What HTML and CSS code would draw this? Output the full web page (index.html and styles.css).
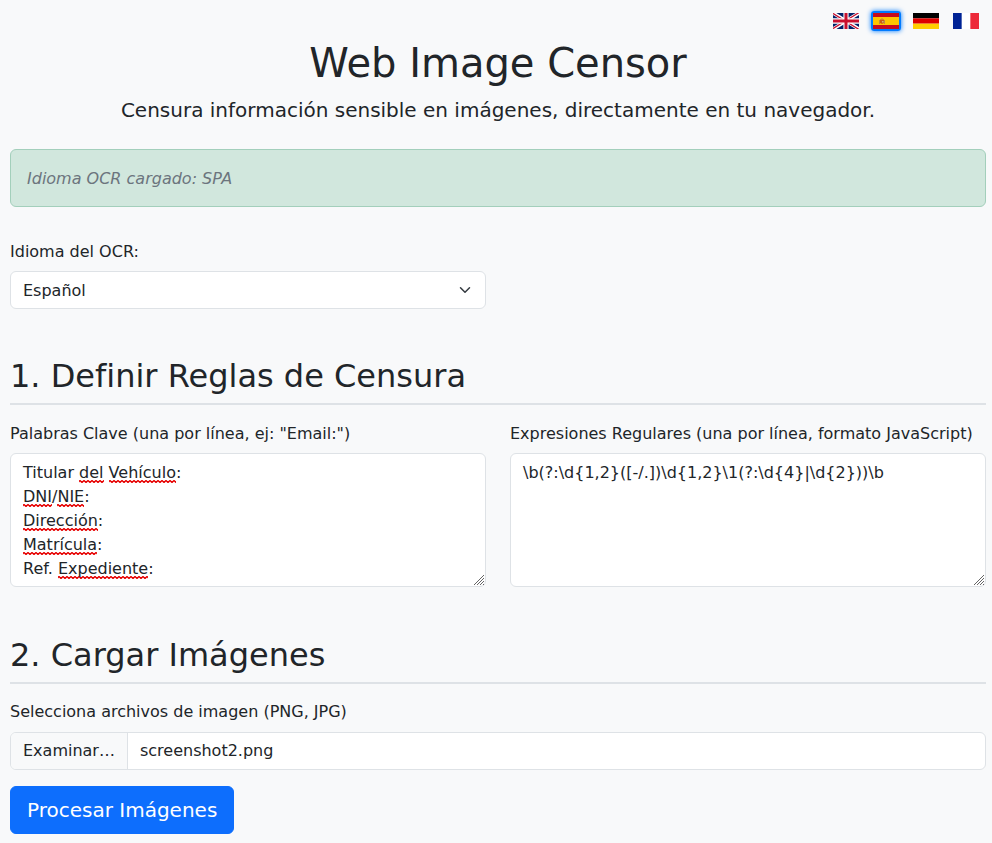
FILE: index.html
```html
<!DOCTYPE html>
<html lang="es">
<head>
<meta charset="utf-8">
<title>Web Image Censor</title>
<link rel="stylesheet" href="styles.css">
</head>
<body>
<nav class="langs">
  <button class="flag" aria-label="English"><svg width="26" height="16" viewBox="0 0 60 36" preserveAspectRatio="none"><path fill="#012169" d="M0 0h60v36H0z"/><path stroke="#fff" stroke-width="8" d="M0 0l60 36M60 0L0 36"/><path stroke="#c8102e" stroke-width="3" d="M0 1l60 36M60-1L0 35"/><path stroke="#fff" stroke-width="12" d="M30 0v36M0 18h60"/><path stroke="#c8102e" stroke-width="7" d="M30 0v36M0 18h60"/></svg></button>
  <button class="flag active" aria-label="Español"><svg width="26" height="16" viewBox="0 0 26 16"><path fill="#c60b1e" d="M0 0h26v16H0z"/><path fill="#ffc400" d="M0 4h26v8H0z"/><path fill="#ad1519" opacity=".6" d="M7 6.500h4v3.500l-2 1-2-1z"/><path fill="#c08a3c" d="M6 7h1v4H6zM11 7h1v4h-1zM8 5.500h2v1H8z"/><path fill="#c9b28a" d="M9 8h1.500v1.500H9z"/></svg></button>
  <button class="flag" aria-label="Deutsch"><svg width="26" height="16" viewBox="0 0 26 16"><path d="M0 0h26v5.330H0z"/><path fill="#d00" d="M0 5.330h26v5.340H0z"/><path fill="#ffce00" d="M0 10.670h26V16H0z"/></svg></button>
  <button class="flag" aria-label="Français"><svg width="26" height="16" viewBox="0 0 26 16"><path fill="#fff" d="M0 0h26v16H0z"/><path fill="#002395" d="M0 0h8.670v16H0z"/><path fill="#ed2939" d="M17.330 0H26v16h-8.670z"/></svg></button>
</nav>
<main class="container">
  <header>
    <h1>Web Image Censor</h1>
    <p class="lead">Censura información sensible en imágenes, directamente en tu navegador.</p>
  </header>
  <div class="alert">Idioma OCR cargado: SPA</div>
  <section class="row ocr">
    <div>
      <div class="label">Idioma del OCR:</div>
      <div class="control select"><span>Español</span><svg width="16" height="12" viewBox="0 0 16 16"><path fill="none" stroke="#343a40" stroke-width="2" stroke-linecap="round" stroke-linejoin="round" d="m2 5 6 6 6-6"/></svg></div>
    </div>
  </section>
  <section class="rules">
    <h2>1. Definir Reglas de Censura</h2>
    <div class="row">
      <div>
        <div class="label">Palabras Clave (una por línea, ej: "Email:")</div>
        <div class="control area">Titular <span class="sp">del</span> <span class="sp">Vehículo</span>:<br><span class="sp">DNI</span>/<span class="sp">NIE</span>:<br><span class="sp">Dirección</span>:<br><span class="sp">Matrícula</span>:<br>Ref. <span class="sp">Expediente</span>:<svg class="grip" width="10" height="10" viewBox="0 0 10 10"><path stroke="#666" d="M0 10L10 0M3 10l7-7M6 10l4-4M9 10l1-1"/></svg></div>
      </div>
      <div>
        <div class="label">Expresiones Regulares (una por línea, formato JavaScript)</div>
        <div class="control area">\b(?:\d{1,2}([-/.])\d{1,2}\1(?:\d{4}|\d{2}))\b<svg class="grip" width="10" height="10" viewBox="0 0 10 10"><path stroke="#666" d="M0 10L10 0M3 10l7-7M6 10l4-4M9 10l1-1"/></svg></div>
      </div>
    </div>
  </section>
  <section class="upload">
    <h2>2. Cargar Imágenes</h2>
    <div class="label">Selecciona archivos de imagen (PNG, JPG)</div>
    <div class="control file"><span class="browse">Examinar…</span><span class="name">screenshot2.png</span></div>
    <button class="process">Procesar Imágenes</button>
  </section>
</main>
</body>
</html>
```
FILE: styles.css
```css
* { box-sizing: border-box; }
body {
  margin: 0;
  height: 843px;
  overflow: hidden;
  background: #f8f9fa;
  color: #212529;
  font: 16px/24px "DejaVu Sans", sans-serif;
}
.langs {
  display: flex;
  justify-content: flex-end;
  gap: 10px;
  height: 39px;
  padding: 11px 11px 0 0;
}
.flag {
  width: 30px;
  height: 20px;
  padding: 0;
  border: 2px solid transparent;
  border-radius: 3px;
  background: none;
}
.flag svg { display: block; }
.flag.active {
  border-color: #007bff;
  box-shadow: 0 0 5px #007bff;
}
.container { padding: 0 6px 0 10px; }
h1, h2, p { margin: 0; font-weight: 400; }
h1 {
  margin-bottom: 8px;
  font-size: 40px;
  line-height: 48px;
  text-align: center;
}
.lead {
  margin-bottom: 24px;
  font-size: 20px;
  line-height: 30px;
  text-align: center;
}
.alert {
  height: 58px;
  margin-bottom: 32px;
  padding: 17px 16px 15px;
  border: 1px solid #a3cfbb;
  border-radius: 6px;
  background: #d1e7dd;
  color: #6c757d;
  font-style: italic;
}
.row {
  display: grid;
  grid-template-columns: 1fr 1fr;
  gap: 24px;
  margin-bottom: 48px;
}
.rules .row { margin-bottom: 49px; }
.label {
  padding-top: 1px;
  margin-bottom: 7px;
}
.upload .label {
  padding-top: 0;
  margin-bottom: 8px;
}
.control {
  border: 1px solid #dee2e6;
  border-radius: 6px;
  background: #fff;
  padding: 7px 12px 5px;
}
.select {
  display: flex;
  align-items: center;
  justify-content: space-between;
  height: 38px;
}
.select svg { margin-bottom: 2px; }
.area {
  position: relative;
  height: 134px;
}
.grip {
  position: absolute;
  right: 1px;
  bottom: 1px;
}
.sp {
  padding-bottom: 1px;
  background: url("data:image/svg+xml,%3Csvg xmlns='http://www.w3.org/2000/svg' width='4' height='3'%3E%3Cpath d='M-1 2.500L1 .5 3 2.500 5 .5' fill='none' stroke='%23e60000' stroke-width='1.400'/%3E%3C/svg%3E") left bottom repeat-x;
}
h2 {
  height: 48px;
  margin-bottom: 16px;
  border-bottom: 2px solid #dee2e6;
  font-size: 32px;
  line-height: 38px;
}
.file {
  display: flex;
  height: 38px;
  padding: 0;
  margin-bottom: 16px;
  line-height: 36px;
  overflow: hidden;
}
.browse {
  padding: 0 12px;
  border-right: 1px solid #dee2e6;
  background: #f8f9fa;
}
.name { padding-left: 12px; }
.process {
  display: block;
  height: 48px;
  padding: 8px 16px;
  border: 1px solid #0d6efd;
  border-radius: 6px;
  background: #0d6efd;
  color: #fff;
  font: 20px/30px "DejaVu Sans", sans-serif;
}
```
